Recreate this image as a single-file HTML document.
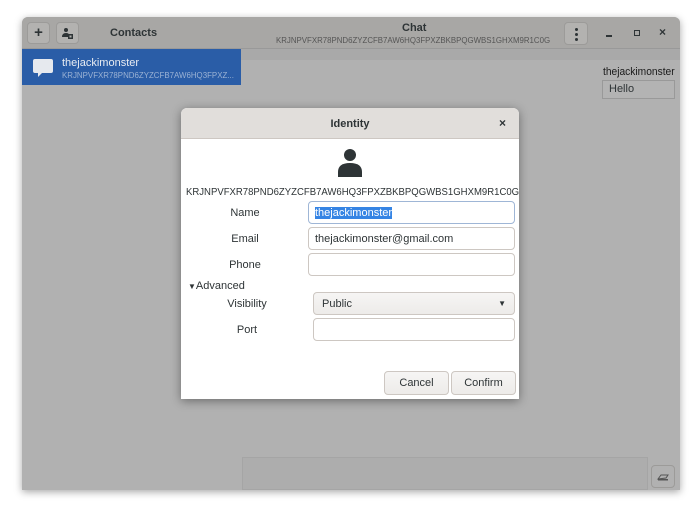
<!DOCTYPE html>
<html><head><meta charset="utf-8"><style>
*{box-sizing:border-box;margin:0;padding:0}
body{width:700px;height:514px;background:#fff;font-family:"Liberation Sans","DejaVu Sans",sans-serif;position:relative;overflow:hidden;font-size:11px;color:#2e3436}
.win{position:absolute;left:22px;top:17px;width:658px;height:473px;background:#b1b1b1;border-radius:6px 6px 0 0;box-shadow:0 2px 8px rgba(0,0,0,.35);overflow:hidden}
.hb{position:absolute;left:0;top:0;width:658px;height:32px;background:#a8a7a5;border-bottom:1px solid #999}
.btn{position:absolute;background:#b3b2b0;border:1px solid #9c9b99;border-radius:4px}
.abs{position:absolute;white-space:nowrap}
.sq{display:inline-block;transform-origin:0 0}
.dlg{position:absolute;left:181px;top:108px;width:338px;height:291px;background:#fff;border-radius:6px 6px 0 0;box-shadow:0 2px 10px rgba(0,0,0,.4);overflow:hidden}
.dh{position:absolute;left:0;top:0;width:338px;height:31px;background:#e1dedb;border-bottom:1px solid #cdc7c2}
.inp{position:absolute;background:#fff;border:1px solid #cdc7c2;border-radius:4px;height:23px;font-size:11px;padding:5px 6px;color:#2e3436}
.lbl{position:absolute;width:120px;text-align:center;font-size:11px;color:#2e3436}
.db{position:absolute;background:linear-gradient(#f6f5f4,#edebe9);border:1px solid #cdc7c2;border-radius:4px;height:24px;text-align:center;line-height:22px;font-size:11px}
</style></head><body>
<div class="win">
 <div class="hb"></div>
 <div class="btn" style="left:5px;top:5px;width:23px;height:22px;text-align:center;line-height:20px;font-size:15px;font-weight:bold">+</div>
 <div class="btn" style="left:34px;top:5px;width:23px;height:22px">
  <svg width="23" height="22" viewBox="0 0 23 22" style="position:absolute;left:-1px;top:-1px"><circle cx="10" cy="8" r="2" fill="#2e3436"/><path d="M6 15 q0-4 4-4 q3 0 3 2 v2z" fill="#2e3436"/><rect x="12" y="12" width="5" height="5" fill="#2e3436"/><rect x="13.5" y="13.5" width="2" height="2" fill="#b3b2b0"/></svg>
 </div>
 <div class="abs" style="left:88px;top:10px;font-weight:bold;font-size:11px">Contacts</div>
 <div class="abs" style="left:380px;top:5px;font-weight:bold;font-size:11px">Chat</div>
 <div class="abs" style="left:254px;top:18px;font-size:8.5px;color:#555"><span class="sq" style="transform:scaleX(0.925)">KRJNPVFXR78PND6ZYZCFB7AW6HQ3FPXZBKBPQGWBS1GHXM9R1C0G</span></div>
 <div class="btn" style="left:542px;top:5px;width:24px;height:23px"><div class="abs" style="left:10px;top:5px;width:3px;height:3px;background:#2e3436;border-radius:2px;box-shadow:0 5px 0 #2e3436,0 10px 0 #2e3436"></div></div>
 <div class="abs" style="left:584px;top:18px;width:6px;height:2px;background:#2e3436"></div>
 <div class="abs" style="left:612px;top:13px;width:6px;height:6px;border:1.5px solid #2e3436"></div>
 <div class="abs" style="left:637px;top:8px;font-size:12px;font-weight:bold">×</div>
 <div class="abs" style="left:0;top:32px;width:219px;height:36px;background:#2a5da7"></div>
 <div class="abs" style="left:219px;top:32px;width:439px;height:11px;background:#a9a9a9"></div>
 <svg class="abs" style="left:11px;top:41px" width="20" height="20" viewBox="0 0 20 20"><path d="M2 1h16a2 2 0 0 1 2 2v10a2 2 0 0 1-2 2H9l-4 4v-4H2a2 2 0 0 1-2-2V3a2 2 0 0 1 2-2z" fill="#e6e9ee"/></svg>
 <div class="abs" style="left:40px;top:40px;font-size:11px;color:#e8ecf2">thejackimonster</div>
 <div class="abs" style="left:40px;top:53px;font-size:8.5px;color:#9bb2d4"><span class="sq" style="transform:scaleX(0.93)">KRJNPVFXR78PND6ZYZCFB7AW6HQ3FPXZ...</span></div>
 <div class="abs" style="left:581px;top:49px;font-size:11px;color:#1a1a1a"><span class="sq" style="transform:scaleX(0.93)">thejackimonster</span></div>
 <div class="abs" style="left:580px;top:63px;width:73px;height:19px;border:1px solid #999;background:#b3b3b3;padding:2px 6px;font-size:11px">Hello</div>
 <div class="abs" style="left:220px;top:440px;width:406px;height:33px;background:#adadad;border:1px solid #a5a5a5"></div>
 <div class="btn" style="left:629px;top:448px;width:24px;height:23px;background:#b1b1b1">
  <svg width="24" height="23" viewBox="0 0 24 23" style="position:absolute;left:-1px;top:-1px"><path d="M7 14 l3-4 h7 l-2 3z" fill="none" stroke="#555" stroke-width="1"/><rect x="7" y="14" width="10" height="1.5" fill="#555"/></svg>
 </div>
</div>
<div class="dlg">
 <div class="dh"></div>
 <div class="abs" style="left:0;top:10px;width:338px;text-align:center;font-weight:bold;font-size:11px">Identity</div>
 <div class="abs" style="left:318px;top:8px;font-weight:bold;font-size:12px">×</div>
 <svg class="abs" style="left:156px;top:40px" width="26" height="30" viewBox="0 0 26 30"><circle cx="13" cy="7" r="6" fill="#2e3436"/><path d="M1 29 v-5 q0-9 12-9 q12 0 12 9 v5z" fill="#2e3436"/></svg>
 <div class="abs" style="left:5px;top:78px;font-size:10.5px"><span class="sq" style="transform:scaleX(0.91)">KRJNPVFXR78PND6ZYZCFB7AW6HQ3FPXZBKBPQGWBS1GHXM9R1C0G</span></div>
 <div class="lbl" style="left:4px;top:99px">Name</div>
 <div class="inp" style="left:127px;top:93px;width:207px;border-color:#9fb6d6"><span style="background:#3584e4;color:#fff">thejackimonster</span></div>
 <div class="lbl" style="left:4px;top:125px">Email</div>
 <div class="inp" style="left:127px;top:119px;width:207px">thejackimonster@gmail.com</div>
 <div class="lbl" style="left:4px;top:151px">Phone</div>
 <div class="inp" style="left:127px;top:145px;width:207px"></div>
 <div class="abs" style="left:7px;top:172px;font-size:11px"><span style="font-size:8px">▼</span>Advanced</div>
 <div class="lbl" style="left:6px;top:190px">Visibility</div>
 <div class="db" style="left:132px;top:184px;width:202px;height:23px;text-align:left;padding-left:8px">Public<span style="position:absolute;right:8px;font-size:8px">▼</span></div>
 <div class="lbl" style="left:6px;top:216px">Port</div>
 <div class="inp" style="left:132px;top:210px;width:202px"></div>
 <div class="db" style="left:203px;top:263px;width:65px">Cancel</div>
 <div class="db" style="left:270px;top:263px;width:65px">Confirm</div>
</div>
</body></html>
